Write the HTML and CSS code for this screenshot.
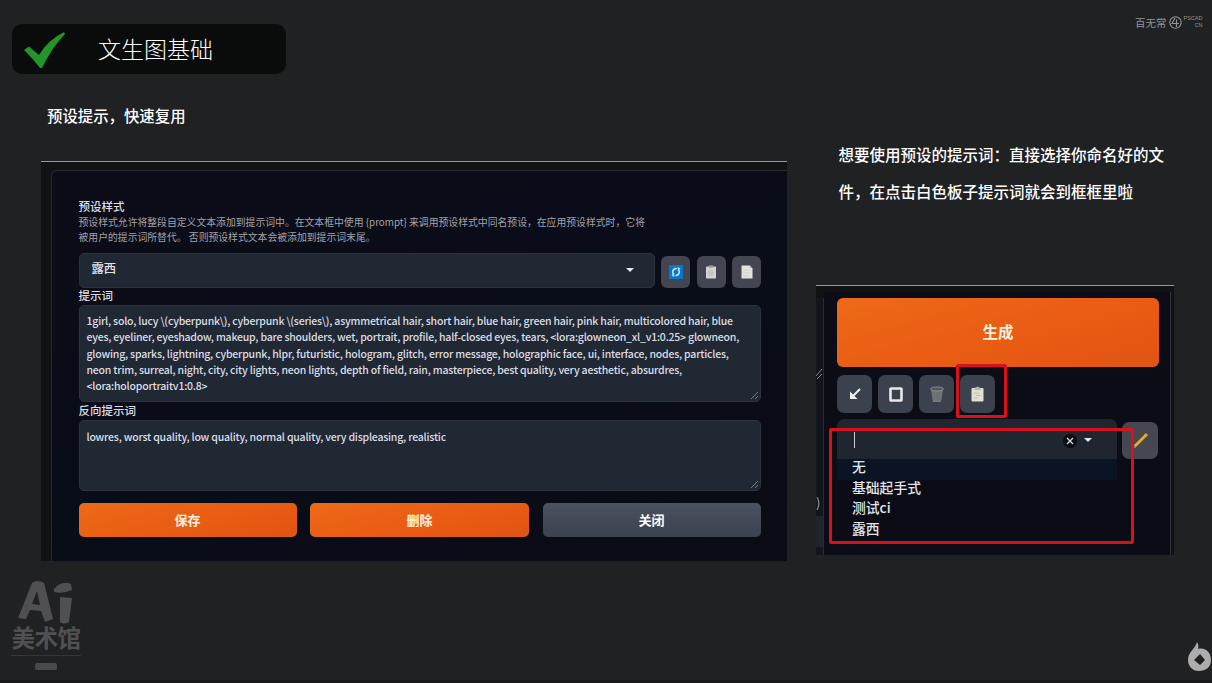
FILE: index.html
```html
<!DOCTYPE html>
<html lang="zh-CN">
<head>
<meta charset="utf-8">
<title>文生图基础</title>
<link rel="stylesheet" href="styles.css">
</head>
<body>
<main class="slide">
  <section class="left">
    <h1 class="title">
      <svg class="check" width="42" height="36" viewBox="0 0 42 36"><path d="M0 18L5 14.500L15 23Q24 8 40 0L41 2Q29 14 18 36H16Q10 28 0 18Z" fill="#22942a"/></svg>
      <span>文生图基础</span>
    </h1>
    <p class="caption">预设提示，快速复用</p>
    <div class="shot editor">
      <div class="panel">
        <h2 class="label">预设样式</h2>
        <p class="hint"><span>预设样式允许将整段自定义文本添加到提示词中。在文本框中使用 {prompt} 来调用预设样式中同名预设，在应用预设样式时，它将</span><span>被用户的提示词所替代。 否则预设样式文本会被添加到提示词末尾。</span></p>
        <div class="picker">
          <div class="select"><span>露西</span><i class="caret"></i></div>
          <button class="tool"><svg width="14" height="14" viewBox="0 0 14 14"><rect width="14" height="14" rx="1" fill="#0877ca"/><circle cx="7" cy="7" r="3.300" fill="none" stroke="#b9e0fa" stroke-width="1.700" stroke-dasharray="8.500 1.900" stroke-dashoffset="3"/><path d="M8.500 2L11.500 3.500L9 6ZM5.500 12L2.500 10.500L5 8Z" fill="#b9e0fa"/></svg></button>
          <button class="tool"><svg width="12" height="14" viewBox="0 0 12 14"><rect x="1" y="1.500" width="10" height="12" rx=".7" fill="#d5d2d1"/><path d="M4 0.500H8V3H4Z" fill="#a5a4a8"/><path d="M3 6H8M3 8H9M3 10H8" stroke="#b5b2b2" stroke-width=".8"/></svg></button>
          <button class="tool"><svg width="12" height="14" viewBox="0 0 12 14"><path d="M.5 .5H9V3H11.500V13.500H.5Z" fill="#e3e3da"/><path d="M9 .5L11.500 3H9Z" fill="#aaa"/><path d="M2 5H9M2 8H9M2 11H8" stroke="#cfcfc6" stroke-width=".6"/></svg></button>
        </div>
        <h2 class="label second">提示词</h2>
        <div class="area prompt">
          <span>1girl, solo, lucy \(cyberpunk\), cyberpunk \(series\), asymmetrical hair, short hair, blue hair, green hair, pink hair, multicolored hair, blue</span>
          <span>eyes, eyeliner, eyeshadow, makeup, bare shoulders, wet, portrait, profile, half-closed eyes, tears, &lt;lora:glowneon_xl_v1:0.25&gt; glowneon,</span>
          <span>glowing, sparks, lightning, cyberpunk, hlpr, futuristic, hologram, glitch, error message, holographic face, ui, interface, nodes, particles,</span>
          <span>neon trim, surreal, night, city, city lights, neon lights, depth of field, rain, masterpiece, best quality, very aesthetic, absurdres,</span>
          <span>&lt;lora:holoportraitv1:0.8&gt;</span>
          <svg class="grip" width="9" height="9" viewBox="0 0 9 9"><path d="M1 8L8 1M5 8L8 5"/></svg>
        </div>
        <h2 class="label third">反向提示词</h2>
        <div class="area negative">
          <span>lowres, worst quality, low quality, normal quality, very displeasing, realistic</span>
          <svg class="grip" width="9" height="9" viewBox="0 0 9 9"><path d="M1 8L8 1M5 8L8 5"/></svg>
        </div>
        <div class="actions"><button class="orange">保存</button><button class="orange">删除</button><button class="gray">关闭</button></div>
      </div>
    </div>
    <div class="museum">
      <svg width="56" height="44" viewBox="0 0 56 44"><path d="M0 38L14 3Q19-1 26 3L35 39L27 42L23 31L12 30L8 39ZM14 24L22 25L19 11ZM42 17L54 18L51 42Q46 45 42 42ZM36 9Q44 0 53 4L54 10Q45 14 36 12Z" fill="#505052" fill-rule="evenodd"/></svg>
      <span class="museum-name">美术馆</span>
      <span class="rule"></span><span class="stamp"></span>
    </div>
  </section>
  <section class="right">
    <div class="brand"><span>百无常</span><svg width="13" height="13" viewBox="0 0 13 13"><circle cx="6.500" cy="6.500" r="5.700"/><path d="M6 2L3 7.500H10M7.500 3.500V11"/></svg><div class="brand-en"><span>PSCAD</span><span>CN</span></div></div>
    <p class="note"><span>想要使用预设的提示词：直接选择你命名好的文</span><span>件，在点击白色板子提示词就会到框框里啦</span></p>
    <div class="shot generate">
      <div class="strip"><svg width="7" height="11" viewBox="0 0 7 11"><path d="M0 8L6 1M1 11L6 6"/></svg><b>)</b><i></i></div>
      <div class="content">
        <button class="orange big">生成</button>
        <div class="tools">
          <button class="tool2"><svg width="12" height="12" viewBox="0 0 12 12"><path d="M11 1L4 8" stroke="#f0f0f2" stroke-width="2"/><path d="M1 3.500V11H8.500Z" fill="#f0f0f2"/></svg></button>
          <button class="tool2"><svg width="14" height="15" viewBox="0 0 14 15"><rect x="1.500" y="1.500" width="11" height="12" rx=".5" fill="none" stroke="#e8e8ea" stroke-width="2.600"/></svg></button>
          <button class="tool2"><svg width="14" height="17" viewBox="0 0 14 17"><path d="M1 3L3 16H11L13 3Z" fill="#747679"/><ellipse cx="7" cy="3" rx="6.500" ry="2" fill="#55575b" stroke="#898b8d"/><path d="M4 6L5 14M7 6V14M10 6L9 14" stroke="#5f646a" stroke-width=".7"/></svg></button>
          <button class="tool2"><svg width="13" height="16" viewBox="0 0 13 16"><rect x=".5" y="2" width="12" height="13.500" rx="1" fill="#e1dfcf"/><path d="M3.500 3V1.500H5Q6.500-.5 8 1.500H9.500V4H3.500Z" fill="#b6b4af"/><path d="M3 7H8M5 9.500H10M3 12H7" stroke="#bebbaa" stroke-width=".9"/></svg></button>
        </div>
        <div class="combo">
          <div class="dropdown"><div class="field"><i class="cursor"></i><svg class="clear" width="14" height="14" viewBox="0 0 14 14"><circle cx="7" cy="7" r="7" fill="#0b0d12"/><path d="M4 4L10 10M10 4L4 10" stroke="#d5d7dc" stroke-width="1.400"/></svg><i class="caret"></i></div>
            <ul><li>无</li><li>基础起手式</li><li>测试ci</li><li>露西</li></ul></div>
          <button class="pencil"><svg width="17" height="17" viewBox="0 0 17 17"><path d="M2 15L14 3" stroke="#e7ad20" stroke-width="2.800"/><path d="M13 4L15 2" stroke="#d6a254" stroke-width="3"/><path d="M1 16L3 14" stroke="#777" stroke-width="1.500"/></svg></button>
        </div>
      </div>
      <div class="mark mark-tool"></div><div class="mark mark-list"></div>
    </div>
    <svg class="flame" width="23" height="30" viewBox="0 0 23 30"><path d="M9 0C10 2 11 3 10 7C18 5 23 11 23 18C23 25 18 29 11 29C4 29 0 24 0 18C0 10 7 7 9 0ZM12 12L6 18L12 23L17 18Z" fill="#adadad" fill-rule="evenodd"/></svg>
  </section>
</main>
</body>
</html>
```

FILE: styles.css
```css
*{box-sizing:border-box}
body{margin:0;background:#202123;color:#fff;font-family:"Noto Sans CJK SC","Noto Sans",sans-serif}
h1,h2,p,ul{margin:0;padding:0;font-weight:inherit}
button{border:0;padding:0;margin:0;font:inherit;color:inherit;display:flex;align-items:center;justify-content:center;flex-shrink:0}
.slide{width:1212px;height:683px;display:grid;grid-template-columns:816px 396px;overflow:hidden;border-bottom:3px solid #18191b}
.left,.right{display:flex;flex-direction:column;align-items:flex-start;min-width:0}
.title{width:274px;height:50px;margin:24px 0 0 12px;background:#0a0c0c;border-radius:10px;display:flex;align-items:center;padding-left:12px;gap:32px;font-size:23px;font-weight:300;line-height:48px;white-space:nowrap}
.title span{height:50px}
.check{margin-top:2px}
.caption{margin:30px 0 0 47px;height:25px;line-height:23px;font-size:15.4px;font-weight:500;white-space:nowrap}
.shot{border-top:1px solid #99999b;background:#111214}
.editor{margin:32px 0 0 41px;width:746px;height:400px;padding:8px 0 0 10px}
.panel{height:391px;border:1px solid #292a2e;border-right:0;border-bottom:0;border-radius:6px 0 0 0;background:linear-gradient(160deg,#0c0c18,#080d18 55%,#0b0c14);padding:26px 26px 0 26.5px}
.label{height:18px;line-height:18px;font-size:11.5px;font-weight:500;color:#dedfe6}
.hint{color:#a2a3ac;font-size:9.83px;line-height:15px;height:32px;white-space:nowrap}
.hint span{display:block}
.picker{display:flex;align-items:center;gap:6.5px;margin-top:6px;height:35px}
.select{width:576px;height:35px;border:1px solid #2b323e;background:#202834;border-radius:5px;display:flex;align-items:center;justify-content:space-between;padding:0 20px 6px 12px;font-size:12.3px;font-weight:500;color:#e1e3e9}
.select .caret{margin-top:5px}
.caret{width:0;height:0;border:4px solid transparent;border-top:4px solid #e4e6ea;border-bottom:0}
.tool{width:29px;height:32px;background:#434550;border-radius:6px;margin-top:2px}
.second{height:17px;line-height:15px}
.area{position:relative;width:682.5px;background:#202834;border:1px solid #2c323e;border-radius:5px;color:#dcdee5;font-size:10.5px;letter-spacing:-.205px;font-weight:500;padding:7px 7px;line-height:16.25px;white-space:nowrap}
.area span{display:block}
.prompt{height:97px}
.negative{height:71px;padding-top:8px}
.third{height:18px;line-height:17px}
.grip{position:absolute;right:1px;bottom:1px;fill:none;stroke:#777c86;stroke-width:1}
.actions{display:grid;grid-template-columns:218px 219px 218px;gap:13.5px;margin-top:12px;height:34px}
.actions button{height:34px;border-radius:5px;font-size:13px;font-weight:700;padding-bottom:2px}
.orange{background:linear-gradient(165deg,#ee6a18,#e95d14 50%,#e05412);color:#fff1df}
.gray{background:linear-gradient(#4a515f,#3b424f)}
.museum{display:flex;flex-direction:column;align-items:center;width:72px;margin:19px 0 0 10px;color:#505052}
.museum-name{font-size:23.5px;line-height:27px;height:29px;font-weight:700;letter-spacing:-.5px;white-space:nowrap}
.rule{width:70px;height:1px;background:#353638;margin-top:2px}
.stamp{width:22px;height:7px;border-radius:2px;background:#4a4a4c;margin-top:7px}
.brand{display:flex;align-items:center;margin:15px 0 0 319px;height:14px;color:#949496;font-size:10.5px;gap:2px;white-space:nowrap}
.brand svg{fill:none;stroke:#949496;stroke-width:1.1}
.brand-en{display:flex;flex-direction:column;align-items:flex-end;font-family:"Liberation Sans",sans-serif;font-size:5.5px;line-height:7px}
.note{margin:107px 0 0 22.5px;font-size:15.5px;font-weight:500;line-height:36.500px;height:73px;white-space:nowrap}
.note span{display:block}
.generate{position:relative;width:358px;height:270px;margin-top:76px;display:flex;padding-top:6px}
.strip{width:8px;display:flex;flex-direction:column;background:#12151c;border-right:1px solid #252b37;margin:6px 0 0}
.strip svg{fill:none;stroke:#868991;stroke-width:1;margin-top:70px;flex-shrink:0}
.strip b{font-size:13px;font-weight:400;margin-top:115px;line-height:18px;color:#a4a5aa}
.strip i{height:31px;background:#20242c;margin-top:4px}
.content{width:347px;height:263px;padding:6px 12px 0 13px;background:#0b0c16;border-right:1px solid #303139}
.big{width:322px;height:69px;border-radius:6px;font-size:15.5px;font-weight:700;padding-bottom:3px}
.tools{display:flex;gap:6px;margin-top:8px}
.tool2{width:35px;height:38px;border-radius:7px;background:#3b424e}
.combo{display:flex;gap:5px;margin-top:6px}
.dropdown{width:281px}
.field{height:40px;background:#202630;border-radius:7px 7px 0 0;display:flex;align-items:center;padding:1px 25px 0 17px}
.cursor{width:1px;height:16px;background:#c9ccd1}
.clear{margin:2px 7px 0 auto}
ul{list-style:none;font-size:13.800px;font-weight:500;color:#e2e4ec}
li{height:20.6px;line-height:15px;padding-left:15px;white-space:nowrap}
li:first-child{background:#0b1422}
.pencil{width:36px;height:37px;margin-top:3px;border-radius:7px;background:#454751}
.mark{position:absolute;border:3px solid #d7121d;border-radius:2px}
.mark-tool{left:140px;top:78px;width:51px;height:54px}
.mark-list{left:13px;top:142px;width:305px;height:116px}
.flame{margin:87px 0 0 372px}
```
